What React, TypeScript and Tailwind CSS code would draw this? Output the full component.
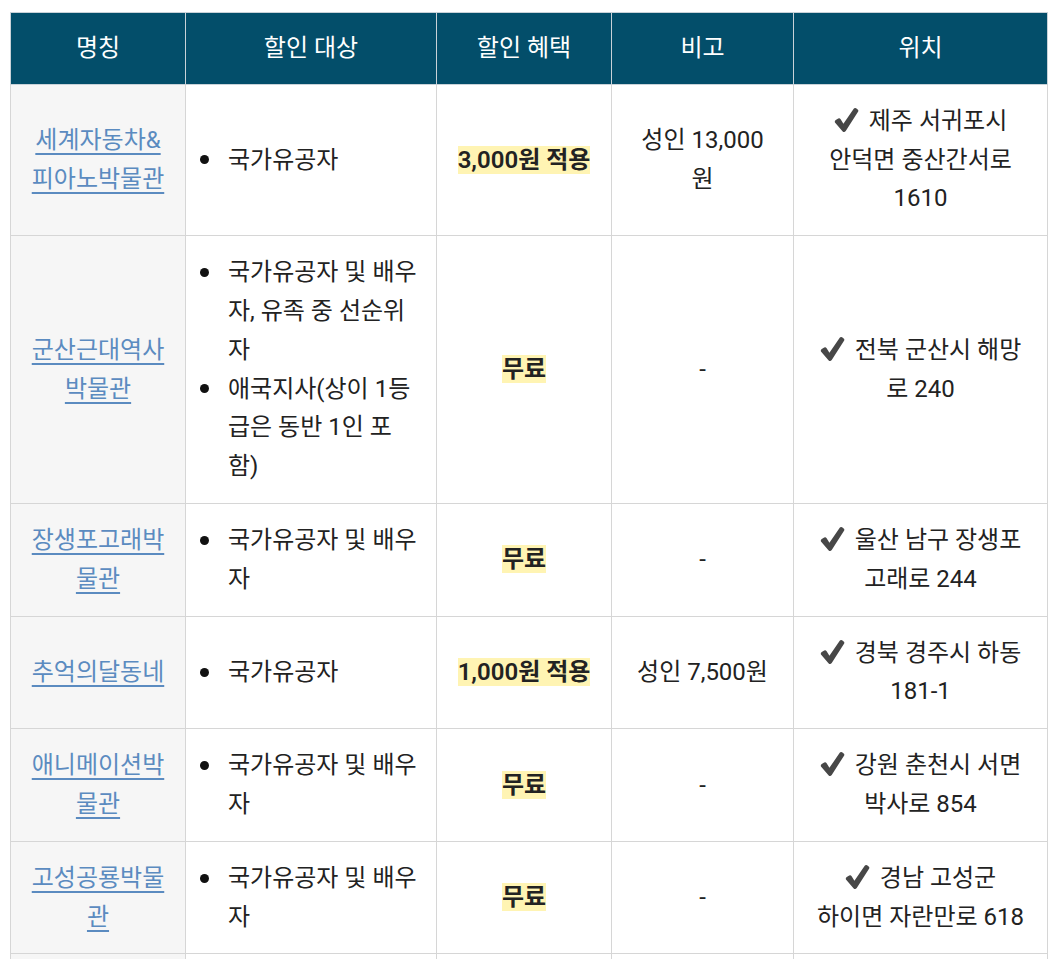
import { ReactNode } from "react";

type Row = {
  name: string;
  targets: string[];
  benefit: string;
  note: string;
  location: string[];
};

const rows: Row[] = [
  {
    name: "세계자동차&피아노박물관",
    targets: ["국가유공자"],
    benefit: "3,000원 적용",
    note: "성인 13,000원",
    location: ["제주 서귀포시", "안덕면 중산간서로 1610"],
  },
  {
    name: "군산근대역사박물관",
    targets: ["국가유공자 및 배우자, 유족 중 선순위자", "애국지사(상이 1등급은 동반 1인 포함)"],
    benefit: "무료",
    note: "-",
    location: ["전북 군산시 해망로 240"],
  },
  {
    name: "장생포고래박물관",
    targets: ["국가유공자 및 배우자"],
    benefit: "무료",
    note: "-",
    location: ["울산 남구 장생포고래로 244"],
  },
  {
    name: "추억의달동네",
    targets: ["국가유공자"],
    benefit: "1,000원 적용",
    note: "성인 7,500원",
    location: ["경북 경주시 하동 181-1"],
  },
  {
    name: "애니메이션박물관",
    targets: ["국가유공자 및 배우자"],
    benefit: "무료",
    note: "-",
    location: ["강원 춘천시 서면 박사로 854"],
  },
  {
    name: "고성공룡박물관",
    targets: ["국가유공자 및 배우자"],
    benefit: "무료",
    note: "-",
    location: ["경남 고성군", "하이면 자란만로 618"],
  },
];

function Check() {
  return (
    <svg viewBox="0 0 26 26" className="inline-block w-[25px] h-[26px] align-[-4px] mr-[10px] fill-[#474747]">
      <path d="M1 15.5 Q0.4 14 1.8 13 L4.4 11.4 Q6 10.8 6.9 12.2 L9.8 17 L20.5 1.2 Q21.5 0 23 0.8 L24.6 2 Q25.8 3 25 4.3 L12.2 24.4 Q10.6 26.6 8.8 24.6 Z" />
    </svg>
  );
}

function Cell({ children, className = "" }: { children: ReactNode; className?: string }) {
  return <td className={`border border-[#d6d6d6] py-[17px] align-middle ${className}`}>{children}</td>;
}

export default function App() {
  const heads = ["명칭", "할인 대상", "할인 혜택", "비고", "위치"];
  return (
    <div
      className="bg-white px-[10px] pt-[12px] text-[24px] leading-[38.8px] text-[#222]"
      style={{ fontFamily: 'Roboto, "Noto Sans CJK KR", sans-serif' }}
    >
      <table className="w-full table-fixed border-collapse">
        <colgroup>
          <col className="w-[175px]" />
          <col className="w-[251px]" />
          <col className="w-[175px]" />
          <col className="w-[182px]" />
          <col />
        </colgroup>
        <thead>
          <tr className="bg-[#034e6a]">
            {heads.map((h) => (
              <th
                key={h}
                className="border border-[#c9d2d8] px-4 py-4 text-center font-normal text-white"
              >
                {h}
              </th>
            ))}
          </tr>
        </thead>
        <tbody>
          {rows.map((r) => (
            <tr key={r.name}>
              <Cell className="bg-[#f6f6f6] px-4 text-center">
                <a href="#" className="text-[#5b8bc0] underline underline-offset-[5px]">
                  {r.name}
                </a>
              </Cell>
              <Cell className="px-[14px]">
                <ul>
                  {r.targets.map((t) => (
                    <li key={t} className="flex">
                      <span className="flex h-[38.8px] w-[28px] shrink-0 items-center">
                        <span className="h-[9px] w-[9px] rounded-full bg-[#111]" />
                      </span>
                      <span>{t}</span>
                    </li>
                  ))}
                </ul>
              </Cell>
              <Cell className="px-4 text-center">
                <span className="bg-[#fff4b3] font-semibold">{r.benefit}</span>
              </Cell>
              <Cell className="px-[22px] text-center">{r.note}</Cell>
              <Cell className="px-5 text-center">
                <Check />
                {r.location.map((part, i) => (
                  <span key={part}>
                    {i > 0 && <br />}
                    {part}
                  </span>
                ))}
              </Cell>
            </tr>
          ))}
          <tr>
            <Cell className="bg-[#f6f6f6] px-4">&nbsp;</Cell>
            <Cell className="px-[14px]">&nbsp;</Cell>
            <Cell className="px-4">&nbsp;</Cell>
            <Cell className="px-[22px]">&nbsp;</Cell>
            <Cell className="px-5">&nbsp;</Cell>
          </tr>
        </tbody>
      </table>
    </div>
  );
}
